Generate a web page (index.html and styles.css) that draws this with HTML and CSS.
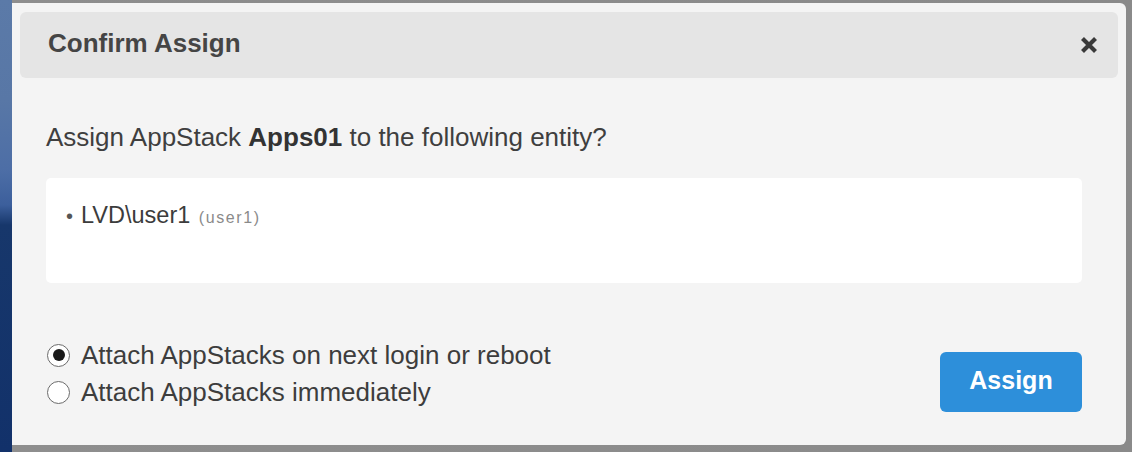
FILE: index.html
```html
<!DOCTYPE html>
<html>
<head>
<meta charset="utf-8">
<link rel="stylesheet" href="styles.css">
</head>
<body>
<div class="screen">
  <div class="wallpaper"></div>
  <div class="backdrop">
    <div class="dialog">
      <div class="header">
        <span class="title">Confirm Assign</span>
        <svg class="close" width="18" height="18" viewBox="0 0 18 18"><path d="M2.5 2.5 L15.5 15.5 M15.5 2.5 L2.5 15.5" stroke="#3a3a3a" stroke-width="4.2" stroke-linecap="butt"/></svg>
      </div>
      <div class="body">
        <p class="question">Assign AppStack <b>Apps01</b> to the following entity?</p>
        <div class="entities">
          <div class="entity"><span class="bullet">•</span>LVD\user1 <span class="sub">(user1)</span></div>
        </div>
        <div class="footer">
          <div class="options">
            <label class="option"><span class="radio checked"></span>Attach AppStacks on next login or reboot</label>
            <label class="option"><span class="radio"></span>Attach AppStacks immediately</label>
          </div>
          <button class="assign">Assign</button>
        </div>
      </div>
    </div>
  </div>
</div>
</body>
</html>
```
FILE: styles.css
```css
html, body {
  margin: 0;
  padding: 0;
}
body {
  width: 1132px;
  height: 452px;
  overflow: hidden;
  font-family: "Liberation Sans", Arial, sans-serif;
}
.screen {
  display: flex;
  width: 1132px;
  height: 452px;
}
.wallpaper {
  width: 12px;
  flex: none;
  background: linear-gradient(180deg, #5b7aa8 0px, #5877a6 100px, #4d6ea6 170px, #3c5f9c 205px, #17376b 225px, #12316a 452px);
}
.backdrop {
  flex: 1;
  background: linear-gradient(90deg, #8e8e8e, #8a8a8a);
  padding: 3px 6px 7px 0;
  display: flex;
}
.dialog {
  flex: 1;
  background: #f4f4f4;
  border-radius: 0 6px 6px 0;
  display: flex;
  flex-direction: column;
}
.header {
  margin: 9px 8px 0 8px;
  height: 66px;
  box-sizing: border-box;
  background: #e5e5e5;
  border-radius: 6px;
  display: flex;
  align-items: center;
  justify-content: space-between;
  padding: 0 20px 3px 28px;
}
.title {
  font-weight: bold;
  font-size: 26px;
  color: #454545;
}
.close {
  display: block;
  margin-top: 3px;
}
.body {
  padding: 0 44px 0 34px;
}
.question {
  margin: 44px 0 0 0;
  font-size: 26px;
  line-height: 30px;
  color: #3f3f3f;
}
.question b {
  color: #333;
}
.entities {
  margin-top: 26px;
  height: 105px;
  box-sizing: border-box;
  background: #ffffff;
  border-radius: 5px;
  padding: 22px 20px;
}
.entity {
  font-size: 23.5px;
  line-height: 30px;
  color: #3c3c3c;
}
.bullet {
  font-size: 20px;
  color: #555;
  margin-right: 8px;
}
.sub {
  font-size: 16px;
  color: #8a8a8a;
  letter-spacing: 1.6px;
  margin-left: 2px;
}
.footer {
  display: flex;
  justify-content: space-between;
  align-items: flex-start;
  margin-top: 57px;
}
.options {
  display: flex;
  flex-direction: column;
  gap: 7px;
}
.option {
  display: flex;
  align-items: center;
  font-size: 26px;
  line-height: 30px;
  color: #3d3d3d;
}
.radio {
  width: 21px;
  height: 21px;
  border: 1.5px solid #6b6b6b;
  border-radius: 50%;
  background: #fff;
  margin: 0 11px 0 1px;
  position: relative;
  flex: none;
}
.radio.checked::after {
  content: "";
  position: absolute;
  left: 4.5px;
  top: 4.5px;
  width: 12px;
  height: 12px;
  border-radius: 50%;
  background: #1a1a1a;
}
.assign {
  margin-top: 12px;
  width: 142px;
  height: 60px;
  border: none;
  border-radius: 6px;
  background: #2d8fda;
  color: #ffffff;
  font-family: "Liberation Sans", Arial, sans-serif;
  font-weight: bold;
  font-size: 25px;
  padding: 0 0 3px 0;
}
```
